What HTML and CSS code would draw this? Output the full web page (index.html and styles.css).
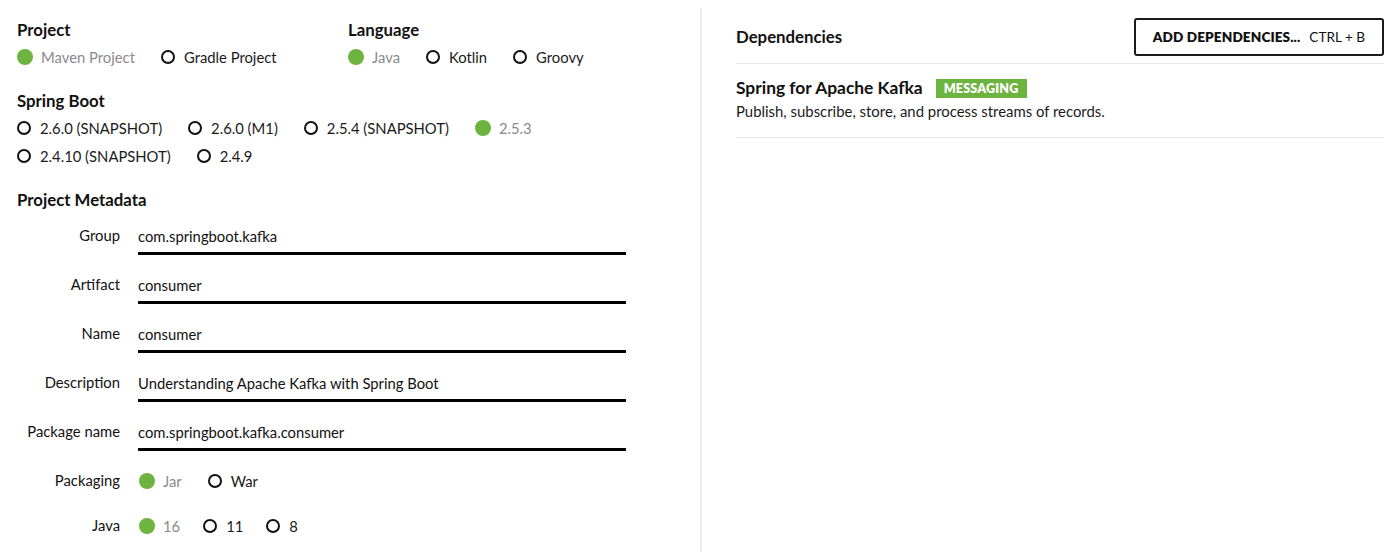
FILE: index.html
```html
<!DOCTYPE html>
<html lang="en">
<head>
<meta charset="utf-8">
<title>Spring Initializr</title>
<link rel="stylesheet" href="styles.css">
</head>
<body>
<div class="app">
  <div class="left">
    <div class="top-grid">
      <div class="section">
        <div class="heading">Project</div>
        <div class="radios">
          <span class="radio selected"><span class="dot"></span>Maven Project</span>
          <span class="radio"><span class="dot"></span>Gradle Project</span>
        </div>
      </div>
      <div class="section">
        <div class="heading">Language</div>
        <div class="radios">
          <span class="radio selected"><span class="dot"></span>Java</span>
          <span class="radio"><span class="dot"></span>Kotlin</span>
          <span class="radio"><span class="dot"></span>Groovy</span>
        </div>
      </div>
    </div>
    <div class="section gap-top">
      <div class="heading">Spring Boot</div>
      <div class="radios">
        <span class="radio"><span class="dot"></span>2.6.0 (SNAPSHOT)</span>
        <span class="radio"><span class="dot"></span>2.6.0 (M1)</span>
        <span class="radio"><span class="dot"></span>2.5.4 (SNAPSHOT)</span>
        <span class="radio selected"><span class="dot"></span>2.5.3</span>
      </div>
      <div class="radios">
        <span class="radio"><span class="dot"></span>2.4.10 (SNAPSHOT)</span>
        <span class="radio"><span class="dot"></span>2.4.9</span>
      </div>
    </div>
    <div class="section gap-top">
      <div class="heading">Project Metadata</div>
      <div class="meta">
        <div class="field"><span class="label">Group</span><span class="input">com.springboot.kafka</span></div>
        <div class="field"><span class="label">Artifact</span><span class="input">consumer</span></div>
        <div class="field"><span class="label">Name</span><span class="input">consumer</span></div>
        <div class="field"><span class="label">Description</span><span class="input">Understanding Apache Kafka with Spring Boot</span></div>
        <div class="field"><span class="label">Package name</span><span class="input">com.springboot.kafka.consumer</span></div>
        <div class="field radio-field"><span class="label">Packaging</span>
          <div class="radios">
            <span class="radio selected"><span class="dot"></span>Jar</span>
            <span class="radio"><span class="dot"></span>War</span>
          </div>
        </div>
        <div class="field radio-field java"><span class="label">Java</span>
          <div class="radios">
            <span class="radio selected"><span class="dot"></span>16</span>
            <span class="radio"><span class="dot"></span>11</span>
            <span class="radio"><span class="dot"></span>8</span>
          </div>
        </div>
      </div>
    </div>
  </div>
  <div class="right">
    <div class="dep-header">
      <div class="heading">Dependencies</div>
      <button class="add-btn"><strong>ADD DEPENDENCIES...</strong><span class="shortcut">CTRL + B</span></button>
    </div>
    <div class="dep-item">
      <div class="dep-title">Spring for Apache Kafka <span class="badge">MESSAGING</span></div>
      <div class="dep-desc">Publish, subscribe, store, and process streams of records.</div>
    </div>
  </div>
</div>
</body>
</html>
```

FILE: styles.css
```css
* { box-sizing: border-box; }
html, body { margin: 0; padding: 0; background: #fff; }
body {
  font-family: Lato, "Open Sans", "Liberation Sans", sans-serif;
  color: #1a1a1a;
  font-size: 14.5px;
  height: 552px;
  overflow: hidden;
}
.app {
  display: flex;
  height: 552px;
}
.left {
  width: 702px;
  flex: none;
  margin-top: 8px;
  padding: 12px 0 0 17px;
  border-right: 2px solid #ececec;
}
.top-grid {
  display: grid;
  grid-template-columns: 331px 1fr;
}
.gap-top { margin-top: 20px; }
.heading {
  font-weight: 700;
  font-size: 16.8px;
  line-height: 20px;
  color: #111;
}
.section > .heading { margin-bottom: 3px; }
.radios {
  display: flex;
  align-items: center;
  gap: 26px;
  height: 28px;
}
.radio {
  display: inline-flex;
  align-items: center;
  font-size: 14.8px;
  color: #1a1a1a;
  white-space: nowrap;
}
.dot {
  width: 14px;
  height: 14px;
  border: 2px solid #111;
  border-radius: 50%;
  margin: 0 9px 0 0;
  flex: none;
}
.radio.selected { color: #8a8a8a; }
.radio.selected .dot {
  width: 16px;
  height: 16px;
  border: none;
  background: #6db33f;
  margin-right: 8px;
}
.meta {
  margin-top: 16px;
  display: flex;
  flex-direction: column;
}
.field {
  display: flex;
  align-items: flex-start;
  margin-bottom: 20px;
}
.label {
  width: 103px;
  flex: none;
  text-align: right;
  margin-right: 18px;
  line-height: 18px;
  font-size: 14.8px;
  color: #111;
}
.input {
  width: 488px;
  line-height: 20px;
  padding-bottom: 6px;
  border-bottom: 3px solid #000;
  font-size: 14.8px;
  color: #111;
}
.radio-field {
  align-items: center;
  margin-top: -4px;
  margin-bottom: 17px;
}
.radio-field .label { margin-top: -2px; }
.radio-field .radios { margin-left: 1px; }
.radio-field.java { margin-top: 0; }
.java .radios { gap: 23px; }
.right {
  flex: 1;
  padding: 18px 16px 0 34px;
}
.dep-header {
  display: flex;
  justify-content: space-between;
  align-items: center;
  padding-bottom: 7px;
  border-bottom: 1px solid #e6e6e6;
}
.add-btn {
  width: 250px;
  height: 38px;
  border: 2px solid #1a1a1a;
  border-radius: 3px;
  background: #fff;
  font-family: inherit;
  font-size: 13.6px;
  color: #111;
  display: flex;
  align-items: center;
  justify-content: center;
  padding: 0;
}
.add-btn strong { font-weight: 800; letter-spacing: 0.1px; }
.shortcut { margin-left: 9px; }
.dep-item {
  padding: 14px 0 16px;
  border-bottom: 1px solid #e6e6e6;
}
.dep-title {
  font-weight: 700;
  font-size: 17.4px;
  line-height: 20px;
  display: flex;
  align-items: center;
  color: #111;
}
.badge {
  display: inline-block;
  margin-left: 13px;
  background: #6db33f;
  color: #fff;
  font-size: 12.5px;
  font-weight: 800;
  line-height: 19px;
  height: 19px;
  padding: 0 8px;
  letter-spacing: 0.2px;
}
.dep-desc {
  margin-top: 3px;
  line-height: 20px;
  font-size: 14.9px;
  color: #1a1a1a;
}
```
